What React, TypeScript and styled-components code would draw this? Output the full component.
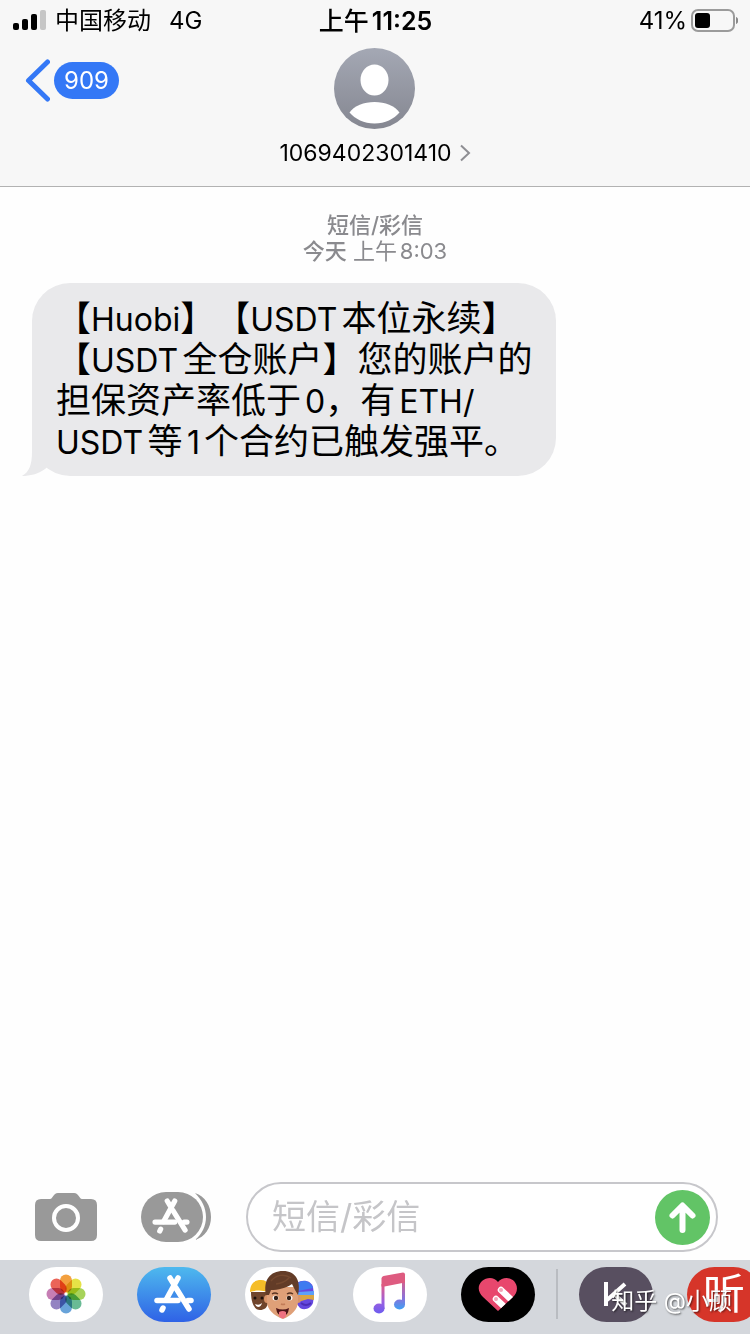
import React from "react";
import styled, { createGlobalStyle } from "styled-components";

const GlobalStyle = createGlobalStyle`
  *, *::before, *::after { box-sizing: border-box; }
  body {
    margin: 0;
    background: #fefefe;
    color: #000;
    font-family: Inter, "Noto Sans CJK SC", sans-serif;
    text-autospace: normal;
    text-spacing-trim: space-all;
  }
  button, input { font: inherit; color: inherit; }
  button { border: 0; padding: 0; background: none; cursor: pointer; }
  svg { display: block; }
`;

const Screen = styled.div`
  position: relative;
  display: flex;
  flex-direction: column;
  min-height: 100vh;
  overflow: hidden;
`;

const Header = styled.header`
  background: #f7f7f7;
  border-bottom: 1px solid #b2b2b2;
`;

const StatusBar = styled.div`
  display: grid;
  grid-template-columns: 1fr auto 1fr;
  align-items: center;
  height: 40px;
  padding: 2px 12px 0 13px;
  font-size: 24px;
  line-height: 32px;
`;

const StatusGroup = styled.div<{ $end?: boolean }>`
  display: flex;
  align-items: center;
  justify-content: ${(p) => (p.$end ? "flex-end" : "flex-start")};
  gap: ${(p) => (p.$end ? "3px" : "8px")};
`;

const Network = styled.span`
  margin-left: 10px;
`;

const Clock = styled.time`
  font-size: 25px;
  font-weight: 600;
`;

const NavBar = styled.div`
  display: grid;
  grid-template-columns: 1fr auto 1fr;
  align-items: start;
  height: 146px;
  padding: 8px 25px 0;
`;

const BackButton = styled.button`
  display: flex;
  align-items: center;
  gap: 4px;
  justify-self: start;
  margin-top: 11px;
`;

const UnreadPill = styled.span`
  height: 37px;
  padding: 0 10px;
  border-radius: 19px;
  background: #3478f6;
  color: #fff;
  font-size: 24px;
  line-height: 37px;
`;

const Contact = styled.button`
  display: flex;
  flex-direction: column;
  align-items: center;
  gap: 8px;
`;

const ContactName = styled.span`
  display: flex;
  align-items: center;
  gap: 7px;
  font-size: 23px;
  line-height: 32px;
`;

const Thread = styled.main`
  flex: 1;
  padding: 25px 32px;
`;

const Stamp = styled.div`
  color: #8a8a8e;
  font-size: 22px;
  line-height: 26px;
  text-align: center;
`;

const Strong = styled.span`
  font-weight: 500;
`;

const Bubble = styled.div`
  position: relative;
  width: fit-content;
  margin-top: 19px;
  padding: 15px 23px 14px 24px;
  border-radius: 38px;
  background: #e9e9eb;
  font-size: 35px;
  line-height: 41px;
`;

const BubbleText = styled.p`
  margin: 0;
`;

const Latin = styled.span`
  font-size: 32px;
  line-height: 32px;
`;

const Tail = styled.svg`
  position: absolute;
  left: -11px;
  bottom: 0;
`;

const Composer = styled.form`
  display: flex;
  align-items: center;
  padding: 0 32px 8px 35px;
`;

const ToolButton = styled.button<{ $gap: number }>`
  flex: none;
  margin-right: ${(p) => p.$gap}px;
`;

const Field = styled.div`
  display: flex;
  flex: 1;
  align-items: center;
  min-width: 0;
  height: 70px;
  padding: 0 6px 0 24px;
  border: 2px solid #c7c7cb;
  border-radius: 35px;
  background: #fff;
`;

const TextInput = styled.input`
  flex: 1;
  width: 100%;
  min-width: 0;
  padding: 0;
  border: 0;
  outline: 0;
  background: none;
  font-size: 34px;
  line-height: 44px;
  &::placeholder { color: #c5c5c8; opacity: 1; }
`;

const SendButton = styled.button`
  flex: none;
  width: 55px;
  height: 55px;
`;

const AppStrip = styled.nav`
  display: flex;
  align-items: center;
  height: 74px;
  padding: 0 0 6px 29px;
  background: #d4d7dc;
  overflow: hidden;
`;

const AppGroup = styled.div`
  display: flex;
  flex: none;
  gap: 34px;
`;

const AppButton = styled.button<{ $bg: string }>`
  display: flex;
  flex: none;
  align-items: center;
  justify-content: center;
  width: 74px;
  height: 55px;
  border-radius: 28px;
  background: ${(p) => p.$bg};
  color: #fff;
  font-size: 42px;
  line-height: 52px;
  overflow: hidden;
`;

const Divider = styled.span`
  flex: none;
  width: 2px;
  height: 50px;
  margin: 0 21px;
  background: #b9bcc1;
`;

const Watermark = styled.div`
  position: absolute;
  right: 18px;
  bottom: 18px;
  color: #fff;
  font-size: 23px;
  line-height: 30px;
  text-shadow: 1px 1px 2px rgba(0, 0, 0, 0.6);
`;

const SignalIcon = () => (
  <svg width="34" height="22" viewBox="0 0 34 22" aria-hidden="true">
    <rect x="0" y="13" width="6" height="7" rx="2" />
    <rect x="9" y="9" width="6" height="11" rx="2" />
    <rect x="18" y="4" width="6" height="16" rx="2" />
    <rect x="27" y="0" width="6" height="20" rx="2" fill="#c6c6c6" />
  </svg>
);

const BatteryIcon = () => (
  <svg width="48" height="24" viewBox="0 0 48 24" aria-hidden="true">
    <rect x="2" y="1" width="42" height="21" rx="6" fill="none" stroke="#9b9b9b" strokeWidth="2" />
    <rect x="5" y="4" width="15" height="15" rx="3" />
    <path d="M46 8c3 1 3 6 0 7z" fill="#8a8a8a" />
  </svg>
);

const BackIcon = () => (
  <svg width="25" height="43" viewBox="0 0 25 43" aria-hidden="true">
    <path d="M22.500 3L3.500 21.500l19 18.500" fill="none" stroke="#3478f6" strokeWidth="5" strokeLinecap="round" strokeLinejoin="round" />
  </svg>
);

const AvatarIcon = () => (
  <svg width="81" height="81" viewBox="0 0 81 81" aria-hidden="true">
    <linearGradient id="avatar" x2="0" y2="1">
      <stop stopColor="#a4a8b4" />
      <stop offset="1" stopColor="#858791" />
    </linearGradient>
    <circle cx="40.500" cy="40.500" r="40.500" fill="url(#avatar)" />
    <ellipse cx="40.500" cy="32" rx="14" ry="15.500" fill="#fff" />
    <path d="M15.500 64.500C20 58 30 54 40.500 54S61 58 65.500 64.500C60 71 51 75.500 40.500 75.500S21 71 15.500 64.500z" fill="#fff" />
  </svg>
);

const ChevronIcon = () => (
  <svg width="12" height="18" viewBox="0 0 12 18" aria-hidden="true">
    <path d="M2 1.500l8 7.500-8 7.500" fill="none" stroke="#8e8e93" strokeWidth="2" />
  </svg>
);

const CameraIcon = () => (
  <svg width="62" height="48" viewBox="0 0 62 48" aria-hidden="true">
    <path d="M6 6h9c3 0 3-6 8-6h16c5 0 5 6 8 6h9q6 0 6 6v30q0 6-6 6H6q-6 0-6-6V12q0-6 6-6z" fill="#999" />
    <circle cx="31" cy="25" r="12" fill="none" stroke="#fff" strokeWidth="4" />
  </svg>
);

const StoreGlyph = () => (
  <g fill="none" stroke="#fff" strokeWidth="5.500" strokeLinecap="round">
    <path d="M-4-16L-1-11" />
    <path d="M4-16L-8 6" />
    <path d="M-17 6.500H4" />
    <path d="M-11 14l-1 2" />
    <path d="M2-6L15 15" />
    <path d="M14 6.500h3" />
  </g>
);

const StoreIcon = () => (
  <svg width="70" height="50" viewBox="0 0 70 50" aria-hidden="true">
    <path d="M54 1C64 4 70 14 70 25S64 45 54 48C61 42 65 34 65 25S61 8 54 1z" fill="#999" />
    <rect width="62" height="50" rx="25" fill="#999" />
    <g transform="translate(30 24) scale(.94)"><StoreGlyph /></g>
  </svg>
);

const SendIcon = () => (
  <svg width="55" height="55" viewBox="0 0 55 55" aria-hidden="true">
    <circle cx="27.500" cy="27.500" r="27.500" fill="#62c466" />
    <path d="M27.500 40V16M17.500 25.500l10-10 10 10" fill="none" stroke="#fff" strokeWidth="6" strokeLinecap="round" strokeLinejoin="round" />
  </svg>
);

const petals = ["#f2982f", "#e4df37", "#9fcf4c", "#5db58c", "#5b9bd6", "#8a78bd", "#c173ae", "#e9574a"];

const Petal = styled.rect`
  mix-blend-mode: multiply;
`;

const PhotosIcon = () => (
  <svg width="40" height="40" viewBox="-20 -20 40 40" aria-hidden="true">
    {petals.map((color, i) => (
      <Petal key={color} x="-6" y="-19.500" width="12" height="18" rx="6" fill={color} fillOpacity="0.92" transform={`rotate(${i * 45})`} />
    ))}
  </svg>
);

const StoreAppIcon = () => (
  <svg width="44" height="44" viewBox="-22 -22 44 44" aria-hidden="true">
    <StoreGlyph />
  </svg>
);

const MemojiIcon = () => (
  <svg width="74" height="55" viewBox="0 0 74 55" aria-hidden="true">
    <path d="M6 25h17v11c-1 5-4 7-8 7-5 0-9-6-9-18z" fill="#70452c" />
    <path d="M5 25c0-8 4-12 11-12 4 0 6 2 7 4v8c-6-2-12-2-18 0z" fill="#f5bd27" />
    <circle cx="10" cy="31" r="1.500" fill="#1c100b" />
    <circle cx="17" cy="31" r="1.500" fill="#1c100b" />
    <path d="M10 37q4 2 7-1-1 4-4 4-2 0-3-3z" fill="#fff" />
    <path d="M52 16c5-4 14-3 16 4l1 8-1 8c-2 5-8 8-13 5l-4-5z" fill="#6548df" />
    <path d="M53 16c5-4 13-2 15 5l-15 3z" fill="#3e7af0" />
    <path d="M53 25l16-1v4H53z" fill="#5ca0fa" />
    <path d="M53 28h16v5l-6-1-10 3z" fill="#d9a544" />
    <path d="M56 36q5 4 10 0" fill="none" stroke="#4b2db6" strokeWidth="2" />
    <ellipse cx="22" cy="32" rx="3" ry="4" fill="#d99468" />
    <ellipse cx="53" cy="32" rx="3" ry="4" fill="#d99468" />
    <path d="M22 20h31v15c0 7-7 14-15 17-9-3-16-10-16-17z" fill="#dfa078" />
    <path d="M21 28C18 13 25 4 38 4c13 0 18 10 15 24l-3-5-3-6c-6 4-14 6-21 6l-2 5z" fill="#633c27" />
    <path d="M26 14C31 8 39 6 46 11M31 17q8-1 13-6" fill="none" stroke="#75492f" strokeWidth="1.500" />
    <path d="M27 27q3-2 6 0M42 27q3-2 6 0" fill="none" stroke="#5b3523" strokeWidth="1.500" />
    <ellipse cx="30.500" cy="31" rx="3" ry="2.500" fill="#fff" />
    <ellipse cx="44.500" cy="31" rx="3" ry="2.500" fill="#fff" />
    <circle cx="31" cy="31" r="2.200" fill="#332017" />
    <circle cx="44" cy="31" r="2.200" fill="#332017" />
    <path d="M36 37q2 1 4 0" fill="none" stroke="#c27c58" strokeWidth="1.500" />
    <path d="M31 41q7 3 13 0-1 8-6 8-6 0-7-8z" fill="#4e1518" />
    <path d="M34 45q4-2 7 0v4q-3 5-7 0z" fill="#ef7180" />
  </svg>
);

const MusicIcon = () => (
  <svg width="34" height="44" viewBox="0 0 34 44" aria-hidden="true">
    <linearGradient id="musicLeft" gradientUnits="userSpaceOnUse" x1="0" x2="0" y1="2" y2="42">
      <stop stopColor="#e4577a" />
      <stop offset=".35" stopColor="#d55d96" />
      <stop offset=".7" stopColor="#9a60e0" />
      <stop offset="1" stopColor="#6a5cf0" />
    </linearGradient>
    <linearGradient id="musicRight" gradientUnits="userSpaceOnUse" x1="0" x2="0" y1="8" y2="38">
      <stop stopColor="#d95f88" />
      <stop offset=".6" stopColor="#8a72da" />
      <stop offset="1" stopColor="#3aa2f5" />
    </linearGradient>
    <g fill="url(#musicLeft)">
      <ellipse cx="6" cy="36.500" rx="5.500" ry="5" />
      <path d="M8.500 12h3v25h-3z" />
    </g>
    <g fill="url(#musicRight)">
      <ellipse cx="26.500" cy="32.500" rx="5.500" ry="5" />
      <path d="M29 8h3v25h-3z" />
    </g>
    <path d="M8.500 6.500q0-2 2-2.500L30 .5q2 0 2 2v8l-20.500 4H8.500z" fill="#de5b80" />
  </svg>
);

const heart = "M20 6C24 1 32 1 36 5c5 6 3 12-1 16L20 35 5 21C0 16-1 10 4 5 9 1 16 1 20 6z";

const HeartIcon = () => (
  <svg width="40" height="36" viewBox="0 0 40 36" aria-hidden="true">
    <clipPath id="heart"><path d={heart} /></clipPath>
    <path d={heart} fill="#e8476d" />
    <g clipPath="url(#heart)" strokeLinecap="round" stroke="#fff" strokeWidth="6.500">
      <path d="M23 14l18 17M18 23l16 15" />
    </g>
    <circle cx="23" cy="14" r="2" fill="#f3a6b8" />
    <circle cx="18" cy="23" r="2" fill="#f3a6b8" />
  </svg>
);

const KeepIcon = () => (
  <svg width="26" height="26" viewBox="0 0 26 26" aria-hidden="true">
    <path d="M3 1v24M22 3L4 19M11 13l12 11" fill="none" stroke="#fff" strokeWidth="4" />
  </svg>
);

export default function App() {
  return (
    <Screen>
      <GlobalStyle />
      <Header>
        <StatusBar>
          <StatusGroup>
            <SignalIcon />
            <span>中国移动</span>
            <Network>4G</Network>
          </StatusGroup>
          <Clock><Strong>上午</Strong>11:25</Clock>
          <StatusGroup $end>
            <span>41%</span>
            <BatteryIcon />
          </StatusGroup>
        </StatusBar>
        <NavBar>
          <BackButton type="button" aria-label="返回">
            <BackIcon />
            <UnreadPill>909</UnreadPill>
          </BackButton>
          <Contact type="button">
            <AvatarIcon />
            <ContactName>
              1069402301410
              <ChevronIcon />
            </ContactName>
          </Contact>
        </NavBar>
      </Header>
      <Thread>
        <Stamp>
          <Strong>短信/彩信</Strong>
          <br />
          <Strong>今天</Strong> 上午8:03
        </Stamp>
        <Bubble>
          <Tail width="40" height="40" viewBox="0 0 40 40" aria-hidden="true">
            <path d="M11 0v16C11 29 8 36 1 40c8 0 16-2 23-7L40 20z" fill="#e9e9eb" />
          </Tail>
          <BubbleText>
            【<Latin>Huobi</Latin>】【<Latin>USDT</Latin>本位永续】
            <br />
            【<Latin>USDT</Latin>全仓账户】您的账户的
            <br />
            担保资产率低于<Latin>0</Latin>，有<Latin>ETH/</Latin>
            <br />
            <Latin>USDT</Latin>等<Latin>1</Latin>个合约已触发强平。
          </BubbleText>
        </Bubble>
      </Thread>
      <Composer onSubmit={(e) => e.preventDefault()}>
        <ToolButton type="button" aria-label="相机" $gap={44}>
          <CameraIcon />
        </ToolButton>
        <ToolButton type="button" aria-label="App" $gap={35}>
          <StoreIcon />
        </ToolButton>
        <Field>
          <TextInput type="text" placeholder="短信/彩信" aria-label="短信/彩信" />
          <SendButton type="submit" aria-label="发送">
            <SendIcon />
          </SendButton>
        </Field>
      </Composer>
      <AppStrip>
        <AppGroup>
          <AppButton type="button" aria-label="照片" $bg="#fff"><PhotosIcon /></AppButton>
          <AppButton type="button" aria-label="App Store" $bg="linear-gradient(#4eb9ee, #2f62e6)"><StoreAppIcon /></AppButton>
          <AppButton type="button" aria-label="拟我表情" $bg="#fff"><MemojiIcon /></AppButton>
          <AppButton type="button" aria-label="音乐" $bg="#fff"><MusicIcon /></AppButton>
          <AppButton type="button" aria-label="Digital Touch" $bg="#000"><HeartIcon /></AppButton>
        </AppGroup>
        <Divider />
        <AppGroup>
          <AppButton type="button" aria-label="Keep" $bg="#584f60"><KeepIcon /></AppButton>
          <AppButton type="button" $bg="#d63529">听</AppButton>
        </AppGroup>
      </AppStrip>
      <Watermark>知乎 @小顾</Watermark>
    </Screen>
  );
}
